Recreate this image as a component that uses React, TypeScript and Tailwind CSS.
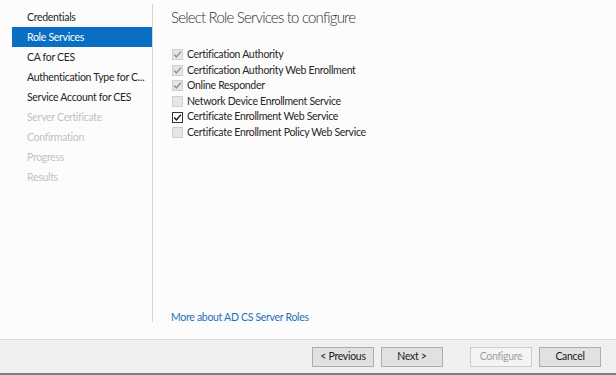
import React from "react";

const steps = [
  { label: "Credentials", state: "done" },
  { label: "Role Services", state: "active" },
  { label: "CA for CES", state: "done" },
  { label: "Authentication Type for C...", state: "done" },
  { label: "Service Account for CES", state: "done" },
  { label: "Server Certificate", state: "off" },
  { label: "Confirmation", state: "off" },
  { label: "Progress", state: "off" },
  { label: "Results", state: "off" },
];

const services = [
  { label: "Certification Authority", checked: true, disabled: true },
  { label: "Certification Authority Web Enrollment", checked: true, disabled: true },
  { label: "Online Responder", checked: true, disabled: true },
  { label: "Network Device Enrollment Service", checked: false, disabled: true },
  { label: "Certificate Enrollment Web Service", checked: true, disabled: false },
  { label: "Certificate Enrollment Policy Web Service", checked: false, disabled: true },
];

const Check = ({ checked, disabled }: { checked: boolean; disabled: boolean }) => (
  <span
    className={`flex items-center justify-center w-[11px] h-[11px] border ${
      disabled ? "bg-[#e6e6e6] border-[#cfcfcf]" : "bg-white border-[#333333]"
    }`}
  >
    {checked && (
      <svg width="9" height="9" viewBox="0 0 9 9">
        <path
          d="M1.2 4.6 L3.4 6.9 L7.9 1.6"
          fill="none"
          stroke={disabled ? "#8c8c8c" : "#111111"}
          strokeWidth="1.4"
        />
      </svg>
    )}
  </span>
);

const Button = ({ label, disabled }: { label: string; disabled?: boolean }) => (
  <button
    className={`w-[62px] h-[20px] border text-[10.5px] leading-none ${
      disabled
        ? "bg-[#f4f4f4] border-[#cccccc] text-[#a0a0a0]"
        : "bg-[#e1e1e1] border-[#adadad] text-[#1a1a1a]"
    }`}
  >
    {label}
  </button>
);

export default function App() {
  return (
    <div
      className="w-[616px] h-[375px] flex flex-col bg-[#fcfcfc] text-[10.5px] tracking-[-0.3px] text-[#262626] overflow-hidden"
      style={{ fontFamily: 'Lato, "Open Sans", sans-serif' }}
    >
      <div className="flex-1 flex">
        <div className="w-[153px] mt-[4px] mb-[17px] border-r border-[#d4d4d4] pt-[3px] pl-[12px]">
          {steps.map((s) => (
            <div
              key={s.label}
              className={`h-[20px] flex items-center pl-[15px] pt-[2px] whitespace-nowrap ${
                s.state === "active"
                  ? "bg-[#0a6fc2] text-white"
                  : s.state === "off"
                  ? "text-[#c2c2c2]"
                  : "text-[#262626]"
              }`}
            >
              {s.label}
            </div>
          ))}
        </div>
        <div className="flex-1 flex flex-col pl-[18px] pt-[5px] pb-[13px]">
          <h1 className="text-[15px] font-light tracking-[-0.8px] text-[#333333] leading-[24px]">
            Select Role Services to configure
          </h1>
          <div className="mt-[18px] flex flex-col">
            {services.map((s) => (
              <label key={s.label} className="h-[15.6px] flex items-center gap-[4px] pl-[1px]">
                <Check checked={s.checked} disabled={s.disabled} />
                <span>{s.label}</span>
              </label>
            ))}
          </div>
          <div className="flex-1" />
          <a className="text-[#1f6fb6] cursor-pointer">More about AD CS Server Roles</a>
        </div>
      </div>
      <div className="h-[36px] bg-[#f0f0f0] border-t border-[#dcdcdc] border-b-2 border-b-[#7d7d7d] flex items-center justify-end pr-[15px]">
        <div className="flex gap-[7px]">
          <Button label="< Previous" />
          <Button label="Next >" />
        </div>
        <div className="flex gap-[7px] ml-[27px]">
          <Button label="Configure" disabled />
          <Button label="Cancel" />
        </div>
      </div>
    </div>
  );
}
